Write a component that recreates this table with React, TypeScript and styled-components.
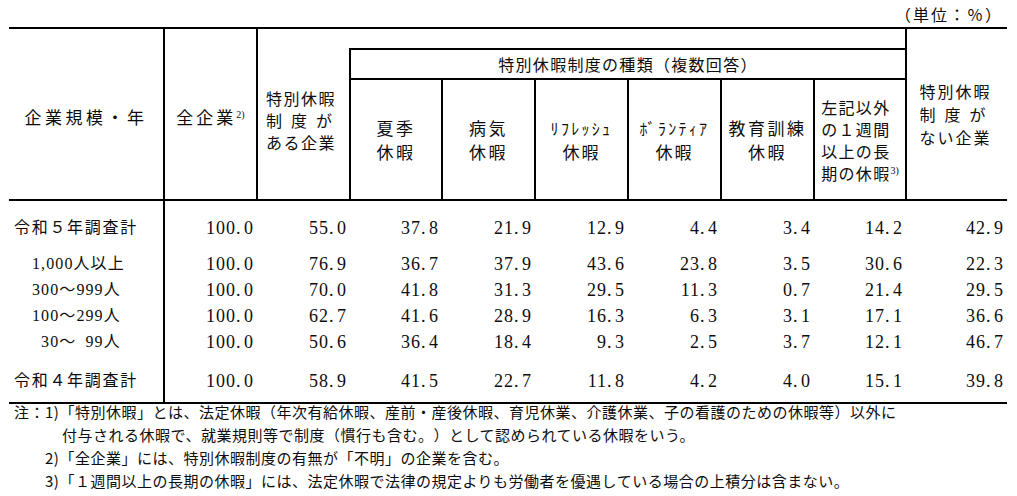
import React from "react";
import styled, { createGlobalStyle } from "styled-components";

const GlobalStyle = createGlobalStyle`
  html, body { margin: 0; padding: 0; background: #ffffff; }
  body {
    font-family: "Noto Sans CJK JP", sans-serif;
    color: #0d0d0d;
    text-spacing-trim: space-all;
  }
`;

const LINE = "2px solid #000";

const Page = styled.div`
  width: 1017px;
  box-sizing: border-box;
  padding: 4px 10px 0 9px;
`;

const Unit = styled.div`
  font-size: 16px;
  line-height: 20px;
  letter-spacing: 2px;
  text-align: right;
  padding-right: 4px;
  margin-bottom: 3px;
`;

const Table = styled.table`
  width: 998px;
  border-collapse: collapse;
  table-layout: fixed;
`;

type BorderProps = {
  $t?: boolean;
  $b?: boolean;
  $l?: boolean;
  $r?: boolean;
};

const Th = styled.th<BorderProps & { $ls?: number; $pt?: number; $fs?: number }>`
  font-weight: normal;
  padding: ${(p) => p.$pt ?? 0}px 0 0 0;
  vertical-align: middle;
  text-align: center;
  font-size: ${(p) => p.$fs ?? 17}px;
  line-height: 22px;
  letter-spacing: ${(p) => p.$ls ?? 0}px;
  white-space: nowrap;
  border-top: ${(p) => (p.$t ? LINE : "none")};
  border-bottom: ${(p) => (p.$b ? LINE : "none")};
  border-left: ${(p) => (p.$l ? LINE : "none")};
  border-right: ${(p) => (p.$r ? LINE : "none")};
`;

const SpacerCell = styled.th`
  height: 19px;
  padding: 0;
  border-top: ${LINE};
`;

const GroupTitle = styled.th`
  height: 28px;
  padding: 0;
  font-weight: normal;
  font-size: 16px;
  letter-spacing: 1.3px;
  border: ${LINE};
  text-align: center;
  vertical-align: middle;
`;

const SubRow = styled.tr`
  height: 121px;
`;

const Stack = styled.div<{ $lh: number }>`
  display: inline-block;
  text-align: left;
  line-height: ${(p) => p.$lh}px;
`;

const CenterStack = styled.div<{ $lh: number }>`
  display: inline-block;
  text-align: center;
  line-height: ${(p) => p.$lh}px;
`;

const Line = styled.div<{ $ls?: number; $fs?: number }>`
  ${(p) => (p.$ls !== undefined ? `letter-spacing: ${p.$ls}px;` : "")}
  ${(p) => (p.$fs !== undefined ? `font-size: ${p.$fs}px;` : "")}
`;

const Sup = styled.sup`
  font-family: "Liberation Serif", serif;
  font-size: 10px;
  letter-spacing: 0;
  vertical-align: 6px;
  line-height: 0;
`;

const Td = styled.td<{ $pt?: number; $pb?: number; $last?: boolean }>`
  padding: ${(p) => p.$pt ?? 0}px 3px ${(p) => p.$pb ?? 0}px 0;
  line-height: 26px;
  text-align: right;
  font-family: "Liberation Serif", serif;
  font-size: 18px;
  letter-spacing: 1px;
  white-space: nowrap;
  border-bottom: ${(p) => (p.$last ? LINE : "none")};
`;

const LabelTd = styled.td<{ $pt?: number; $pb?: number; $last?: boolean; $year?: boolean }>`
  padding: ${(p) => p.$pt ?? 0}px 0 ${(p) => p.$pb ?? 0}px ${(p) => (p.$year ? 5 : 23)}px;
  line-height: 26px;
  text-align: left;
  font-family: "Liberation Serif", "Noto Sans CJK JP", serif;
  font-size: 16px;
  letter-spacing: ${(p) => (p.$year ? 1.7 : 1.1)}px;
  white-space: pre;
  border-right: ${LINE};
  border-bottom: ${(p) => (p.$last ? LINE : "none")};
`;

const Dot = styled.span`
  display: inline-block;
  width: 8px;
  letter-spacing: 0;
  text-align: left;
`;

const Notes = styled.div`
  margin-top: -4px;
  padding-left: 5px;
  font-size: 15px;
  letter-spacing: 0.5px;
  line-height: 23px;
`;

const NoteLine = styled.div<{ $indent: number }>`
  padding-left: ${(p) => p.$indent}px;
  white-space: nowrap;
`;

type Row = {
  label: string;
  year?: boolean;
  pt?: number;
  pb?: number;
  values: string[];
};

const rows: Row[] = [
  {
    label: "令和５年調査計",
    year: true,
    pt: 14,
    values: ["100.0", "55.0", "37.8", "21.9", "12.9", "4.4", "3.4", "14.2", "42.9"],
  },
  {
    label: "1,000人以上",
    pt: 10,
    values: ["100.0", "76.9", "36.7", "37.9", "43.6", "23.8", "3.5", "30.6", "22.3"],
  },
  {
    label: "300～999人",
    values: ["100.0", "70.0", "41.8", "31.3", "29.5", "11.3", "0.7", "21.4", "29.5"],
  },
  {
    label: "100～299人",
    values: ["100.0", "62.7", "41.6", "28.9", "16.3", "6.3", "3.1", "17.1", "36.6"],
  },
  {
    label: "\u200230～\u200299人",
    values: ["100.0", "50.6", "36.4", "18.4", "9.3", "2.5", "3.7", "12.1", "46.7"],
  },
  {
    label: "令和４年調査計",
    year: true,
    pt: 13,
    pb: 8,
    values: ["100.0", "58.9", "41.5", "22.7", "11.8", "4.2", "4.0", "15.1", "39.8"],
  },
];

const colWidths = [155, 93, 93, 92, 93, 93, 93, 93, 92, 101];

function Num({ value }: { value: string }) {
  const [i, d] = value.split(".");
  return (
    <>
      {i}
      <Dot>.</Dot>
      {d}
    </>
  );
}

export default function App() {
  return (
    <>
      <GlobalStyle />
      <Page>
        <Unit>（単位：％）</Unit>
        <Table>
          <colgroup>
            {colWidths.map((w, i) => (
              <col key={i} style={{ width: w }} />
            ))}
          </colgroup>
          <thead>
            <tr>
              <Th rowSpan={3} $t $b $r $ls={3.5} $pt={6}>
                企業規模・年
              </Th>
              <Th rowSpan={3} $t $b $r $ls={3} $pt={6}>
                全企業<Sup>2)</Sup>
              </Th>
              <Th rowSpan={3} $t $b $pt={12} $ls={1.5} $fs={16}>
                <Stack $lh={22}>
                  <Line>特別休暇</Line>
                  <Line $ls={9}>制度が</Line>
                  <Line>ある企業</Line>
                </Stack>
              </Th>
              <SpacerCell colSpan={6} />
              <Th rowSpan={3} $t $b $l $ls={2} $fs={16}>
                <Stack $lh={23}>
                  <Line>特別休暇</Line>
                  <Line $ls={9}>制度が</Line>
                  <Line>ない企業</Line>
                </Stack>
              </Th>
            </tr>
            <tr>
              <GroupTitle colSpan={6}>特別休暇制度の種類（複数回答）</GroupTitle>
            </tr>
            <SubRow>
              <Th $b $l $r $ls={2.5}>
                <CenterStack $lh={24}>
                  <Line>夏季</Line>
                  <Line>休暇</Line>
                </CenterStack>
              </Th>
              <Th $b $l $r $ls={2.5}>
                <CenterStack $lh={24}>
                  <Line>病気</Line>
                  <Line>休暇</Line>
                </CenterStack>
              </Th>
              <Th $b $l $r $ls={2}>
                <CenterStack $lh={24}>
                  <Line $fs={16} $ls={2.3}>ﾘﾌﾚｯｼｭ</Line>
                  <Line>休暇</Line>
                </CenterStack>
              </Th>
              <Th $b $l $r $ls={2}>
                <CenterStack $lh={24}>
                  <Line $fs={16} $ls={2.3}>ﾎﾞﾗﾝﾃｨｱ</Line>
                  <Line>休暇</Line>
                </CenterStack>
              </Th>
              <Th $b $l $r $ls={2.5}>
                <CenterStack $lh={24}>
                  <Line>教育訓練</Line>
                  <Line>休暇</Line>
                </CenterStack>
              </Th>
              <Th $b $l $r $ls={1.3} $fs={16}>
                <Stack $lh={22}>
                  <Line>左記以外</Line>
                  <Line>の１週間</Line>
                  <Line>以上の長</Line>
                  <Line>
                    期の休暇<Sup>3)</Sup>
                  </Line>
                </Stack>
              </Th>
            </SubRow>
          </thead>
          <tbody>
            {rows.map((r, ri) => {
              const last = ri === rows.length - 1;
              return (
                <tr key={ri}>
                  <LabelTd $year={r.year} $pt={r.pt} $pb={r.pb} $last={last}>
                    {r.label}
                  </LabelTd>
                  {r.values.map((v, vi) => (
                    <Td key={vi} $pt={r.pt} $pb={r.pb} $last={last}>
                      <Num value={v} />
                    </Td>
                  ))}
                </tr>
              );
            })}
          </tbody>
        </Table>
        <Notes>
          <NoteLine $indent={0}>
            注：1)「特別休暇」とは、法定休暇（年次有給休暇、産前・産後休暇、育児休業、介護休業、子の看護のための休暇等）以外に
          </NoteLine>
          <NoteLine $indent={48}>
            付与される休暇で、就業規則等で制度（慣行も含む。）として認められている休暇をいう。
          </NoteLine>
          <NoteLine $indent={31}>2)「全企業」には、特別休暇制度の有無が「不明」の企業を含む。</NoteLine>
          <NoteLine $indent={31}>
            3)「１週間以上の長期の休暇」には、法定休暇で法律の規定よりも労働者を優遇している場合の上積分は含まない。
          </NoteLine>
        </Notes>
      </Page>
    </>
  );
}
